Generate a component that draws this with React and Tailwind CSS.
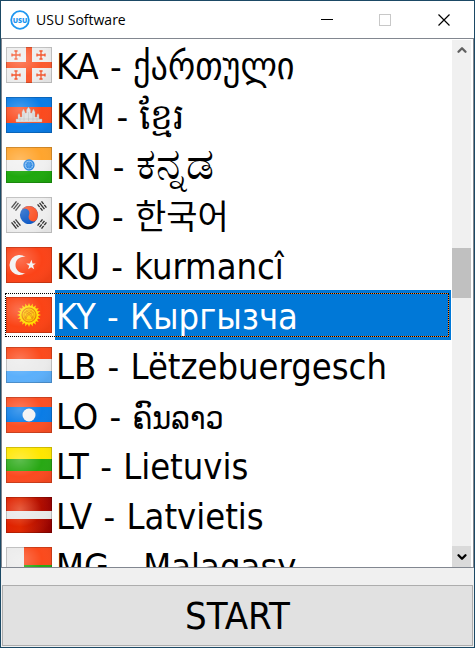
import React, { useState } from 'react';
import { ChevronDown, ChevronUp } from 'lucide-react';

const rays = Array.from({ length: 20 }, (_, i) => i * 18);

const GeorgianCross = ({ x, y }) => (
  <g transform={`translate(${x} ${y})`} stroke="#f4552c" strokeWidth="1.3" fill="none">
    <path d="M0-4V4M-4 0H4M-1.6-4H1.6M-1.6 4H1.6M-4-1.6V1.6M4-1.6V1.6" />
  </g>
);

const Trigram = ({ x, y, angle, broken }) => (
  <g transform={`translate(${x} ${y}) rotate(${angle})`} stroke="#333" strokeWidth="1.4" fill="none">
    {[-2.5, 0, 2.5].map((dy, i) => (
      <path key={dy} d={`M-4 ${dy}H4`} strokeDasharray={broken[i] ? '3.5 1' : undefined} />
    ))}
  </g>
);

const flagArt = {
  KA: (
    <>
      <rect width="46" height="36" fill="#eeeeee" />
      <path d="M20 0h6v15h20v6H26v15h-6V21H0v-6h20z" fill="#fb5a2f" />
      <GeorgianCross x={10} y={8} />
      <GeorgianCross x={35} y={8} />
      <GeorgianCross x={10} y={28} />
      <GeorgianCross x={35} y={28} />
    </>
  ),
  KM: (
    <>
      <rect width="46" height="36" fill="#0a7ce6" />
      <rect y="10" width="46" height="16" fill="#fb4a1e" />
      <path
        d="M10 25v-3h2v-4l1-1.5 1 1.5v2h2v-5l1.5-3 1.5 3v1h1.5v-3l2-3 2 3v3H26v-1l1.5-3 1.5 3v5h2v-2l1-1.5 1 1.5v4h3v3z"
        fill="#dedede"
        stroke="#b5aaa4"
        strokeWidth="0.4"
      />
      <path d="M14 24v-3M18 24v-8M22.5 24v-9M27 24v-8M31 24v-3M12 22h22" stroke="#bdbdbd" strokeWidth="0.6" />
    </>
  ),
  KN: (
    <>
      <rect width="46" height="36" fill="#f0f0f0" />
      <rect width="46" height="13" fill="#ffa52e" />
      <rect y="24" width="46" height="12" fill="#1fa80e" />
      <circle cx="23" cy="18" r="5" fill="#8fc3f5" stroke="#1c7ddc" strokeWidth="1.3" />
      <circle cx="23" cy="18" r="2.6" fill="#3a93ea" stroke="#1c7ddc" strokeWidth="1.8" strokeDasharray="1.2 0.4" />
    </>
  ),
  KO: (
    <>
      <rect width="46" height="36" fill="#eeeeee" />
      <g transform="rotate(25 23 18)">
        <circle cx="23" cy="18" r="9" fill="#0b57c4" />
        <path d="M14 18a9 9 0 0 1 18 0a4.5 4.5 0 0 1-9 0a4.5 4.5 0 0 0-9 0z" fill="#fb4f22" />
      </g>
      <Trigram x={10} y={9} angle={-52} broken={[false, false, false]} />
      <Trigram x={36} y={9} angle={52} broken={[true, false, true]} />
      <Trigram x={10} y={27} angle={52} broken={[false, true, false]} />
      <Trigram x={36} y={27} angle={-52} broken={[true, true, true]} />
    </>
  ),
  KU: (
    <>
      <rect width="46" height="36" fill="#fb4318" />
      <path d="M19.5 10a10 10 0 1 0 0 16a8.2 8.2 0 1 1 0-16z" fill="#f2f2f2" />
      <path d="M25.5 12.8l1 3.6h3.3l-2.7 2.2 1 3.6-2.9-2-3 2 1-3.4-3-2.3 3.6-.1z" fill="#f2f2f2" />
    </>
  ),
  KY: (
    <>
      <rect width="46" height="36" fill="#fb4315" />
      {rays.map((angle) => (
        <path key={angle} d="M21.6 10h2.8L23 6z" fill="#ffdc00" transform={`rotate(${angle} 23 18)`} />
      ))}
      <circle cx="23" cy="18" r="9.5" fill="#ffdc00" />
      <circle cx="23" cy="18" r="7" fill="#ffd200" stroke="#e87a00" strokeWidth="1.2" />
      <circle cx="23" cy="18" r="5" fill="none" stroke="#f08a00" strokeWidth="0.8" />
      <path
        d="M18.5 15.5q6 1 8 7M20 14q6 2 7 7.5M27.5 15.5q-6 1-8 7M26 14q-6 2-7 7.5"
        fill="none"
        stroke="#e87a00"
        strokeWidth="0.8"
      />
    </>
  ),
  LB: (
    <>
      <rect width="46" height="36" fill="#ebebeb" />
      <rect width="46" height="12" fill="#fb4a1c" />
      <rect y="24" width="46" height="12" fill="#5cb0fb" />
    </>
  ),
  LO: (
    <>
      <rect width="46" height="36" fill="#fb4f24" />
      <rect y="10" width="46" height="15" fill="#0a7ce6" />
      <circle cx="23" cy="18" r="6.5" fill="#f2f2f2" />
    </>
  ),
  LT: (
    <>
      <rect width="46" height="36" fill="#fb4a20" />
      <rect width="46" height="12" fill="#ffe600" />
      <rect y="12" width="46" height="12" fill="#28a814" />
    </>
  ),
  LV: (
    <>
      <rect width="46" height="36" fill="url(#latvia)" />
      <rect y="14" width="46" height="8" fill="#e8e8e8" />
    </>
  ),
  MG: (
    <>
      <rect width="46" height="36" fill="#fb4a1c" />
      <rect y="18" width="46" height="18" fill="#28a814" />
      <rect width="18" height="36" fill="#ebebeb" />
    </>
  ),
};

const languages = [
  { code: 'KA', name: 'ქართული', size: 'text-[38px]/8' },
  { code: 'KM', name: 'ខ្មែរ' },
  { code: 'KN', name: 'ಕನ್ನಡ', size: 'text-[44px]/8' },
  { code: 'KO', name: '한국어', size: 'text-[34px]/8' },
  { code: 'KU', name: 'kurmancî' },
  { code: 'KY', name: 'Кыргызча' },
  { code: 'LB', name: 'Lëtzebuergesch' },
  { code: 'LO', name: 'ຄົນລາວ', size: 'text-[32px]/8' },
  { code: 'LT', name: 'Lietuvis' },
  { code: 'LV', name: 'Latvietis' },
  { code: 'MG', name: 'Malagasy' },
];

const Flag = ({ code }) => (
  <svg viewBox="0 0 46 36" className="h-9 w-[46px] shrink-0" aria-hidden="true">
    <defs>
      <radialGradient id="gloss" cx="0.3" cy="0.35" r="0.8">
        <stop offset="0" stopColor="#fff" stopOpacity="0.25" />
        <stop offset="0.6" stopColor="#fff" stopOpacity="0" />
        <stop offset="1" stopColor="#000" stopOpacity="0.05" />
      </radialGradient>
      <linearGradient id="latvia">
        <stop offset="0" stopColor="#e02000" />
        <stop offset="0.3" stopColor="#e02800" />
        <stop offset="1" stopColor="#980000" />
      </linearGradient>
    </defs>
    {flagArt[code]}
    <rect width="46" height="36" fill="url(#gloss)" />
    <rect x="0.5" y="0.5" width="45" height="35" fill="none" stroke="#000" strokeOpacity="0.18" />
  </svg>
);

const TitleBar = () => (
  <header className="flex h-[37px] shrink-0 items-center bg-white pl-[9px] font-['Open_Sans','Noto_Sans',sans-serif]">
    <svg viewBox="0 0 20 20" className="h-5 w-5" aria-hidden="true">
      <circle cx="10" cy="10" r="8.8" fill="#fff" stroke="#1e96f0" strokeWidth="1.8" />
      <text x="10" y="12.5" textAnchor="middle" fontSize="7" fontWeight="800" fill="#1e96f0">
        USU
      </text>
    </svg>
    <h1 className="ml-1.5 grow text-[14px]">USU Software</h1>
    <button type="button" aria-label="Minimize" className="flex h-full w-[58px] items-center justify-center">
      <svg viewBox="0 0 12 12" className="h-3 w-3" stroke="#000">
        <path d="M0 5.5H12" />
      </svg>
    </button>
    <button type="button" aria-label="Maximize" disabled className="flex h-full w-[58px] items-center justify-center">
      <svg viewBox="0 0 12 12" className="h-3 w-3" stroke="#c8c8c8" fill="none">
        <rect x="0.5" y="0.5" width="11" height="11" />
      </svg>
    </button>
    <button type="button" aria-label="Close" className="flex h-full w-[60px] items-center justify-center">
      <svg viewBox="0 0 12 12" className="h-3 w-3" stroke="#000" strokeWidth="1.2">
        <path d="M0.5 0.5L11.5 11.5M11.5 0.5L0.5 11.5" />
      </svg>
    </button>
  </header>
);

const LanguageRow = ({ code, name, size, selected, onSelect }) => (
  <li>
    <label className="relative flex h-[50px] items-center pl-1">
      <input
        type="radio"
        name="language"
        value={code}
        checked={selected}
        onChange={() => onSelect(code)}
        className="sr-only"
      />
      <Flag code={code} />
      <span
        className={
          selected
            ? 'ml-[3px] flex h-full grow bg-[#0078d7] py-[3px] pr-0.5 text-white'
            : 'ml-[3px] flex h-full grow py-[3px] pr-0.5'
        }
      >
        <span
          className={
            selected
              ? 'grow border-y border-r border-[#ff8728] pt-[3px] pl-px whitespace-nowrap'
              : 'grow border-y border-r border-transparent pt-[3px] pl-px whitespace-nowrap'
          }
        >
          {code}
          <span className="mx-px"> - </span>
          <span className={size}>{name}</span>
        </span>
      </span>
      {selected && <span className="absolute inset-y-[3px] right-0.5 left-[3px] border border-dotted border-black" />}
    </label>
  </li>
);

const ScrollBar = () => (
  <div className="mr-0.5 flex w-[19px] shrink-0 flex-col bg-[#f0f0f0]">
    <button type="button" aria-label="Scroll up" className="flex h-5 items-center justify-center text-[#606060]">
      <ChevronUp size={14} strokeWidth={4} />
    </button>
    <div className="grow-[188]" />
    <div className="h-[50px] bg-[#c0c0c0]" />
    <div className="grow-[247]" />
    <button type="button" aria-label="Scroll down" className="flex h-[21px] items-center justify-center bg-[#dadada]">
      <ChevronDown size={14} strokeWidth={4} />
    </button>
  </div>
);

const App = () => {
  const [language, setLanguage] = useState('KY');

  return (
    <div className="flex h-screen flex-col border border-[#1b4965] bg-[#f0f0f0] font-['DejaVu_Sans_Condensed','Noto_Sans','Noto_Sans_CJK_KR',sans-serif] text-black">
      <TitleBar />
      <main className="flex min-h-0 grow flex-col">
        <div className="flex min-h-0 grow basis-0 border border-[#828790] bg-white pt-px">
          <ul aria-label="Language" className="mr-px grow overflow-hidden text-[36px] leading-10">
            {languages.map((item) => (
              <LanguageRow
                key={item.code}
                code={item.code}
                name={item.name}
                size={item.size}
                selected={item.code === language}
                onSelect={setLanguage}
              />
            ))}
          </ul>
          <ScrollBar />
        </div>
        <button
          type="button"
          className="mx-px mt-[17px] mb-px h-[61px] shrink-0 border border-[#adadad] bg-[#e1e1e1] text-[38px] leading-10"
        >
          START
        </button>
      </main>
    </div>
  );
};

export default App;
